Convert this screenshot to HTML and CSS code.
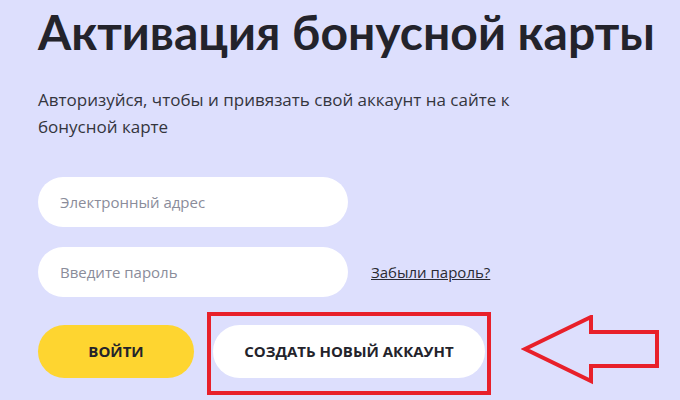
FILE: index.html
```html
<!DOCTYPE html>
<html lang="ru">
<head>
<meta charset="utf-8">
<link rel="stylesheet" href="styles.css">
</head>
<body>
<main class="page">
  <h1 class="title">Активация бонусной карты</h1>
  <p class="lead">Авторизуйся, чтобы и привязать свой аккаунт на сайте к бонусной карте</p>
  <form class="form">
    <div class="row">
      <input class="field" type="email" placeholder="Электронный адрес">
    </div>
    <div class="row">
      <input class="field" type="password" placeholder="Введите пароль">
      <a class="forgot" href="#">Забыли пароль?</a>
    </div>
    <div class="actions">
      <button class="btn btn-primary" type="button">ВОЙТИ</button>
      <div class="highlight">
        <button class="btn btn-secondary" type="button">СОЗДАТЬ НОВЫЙ АККАУНТ</button>
        <span class="frame"></span>
      </div>
      <svg class="arrow" width="142" height="72" viewBox="0 0 142 72">
        <polygon points="4,34 70,2 70,17 136,17 136,51 70,51 70,66" fill="none" stroke="#e8202a" stroke-width="4" stroke-linejoin="miter"/>
      </svg>
    </div>
  </form>
</main>
</body>
</html>
```
FILE: styles.css
```css
* { box-sizing: border-box; }
html, body {
  margin: 0;
  height: 100%;
  background: #dddffd;
}
body {
  font-family: "Open Sans", "Noto Sans", sans-serif;
  color: #23232b;
  overflow: hidden;
}
.page {
  padding: 0 0 0 38px;
}
.title {
  margin: 0;
  padding-top: 4px;
  font-family: "Lato", "Open Sans", sans-serif;
  font-weight: 700;
  font-size: 48px;
  line-height: 56px;
  white-space: nowrap;
}
.lead {
  margin: 26px 0 0;
  width: 480px;
  font-size: 17px;
  line-height: 27px;
  color: #34353d;
}
.form {
  margin-top: 37px;
  display: flex;
  flex-direction: column;
  gap: 20px;
}
.row {
  display: flex;
  align-items: center;
  gap: 23px;
}
.field {
  width: 310px;
  height: 50px;
  border: none;
  border-radius: 25px;
  background: #fff;
  padding: 0 22px;
  font-family: inherit;
  font-size: 15px;
  color: #23232b;
  outline: none;
}
.field::placeholder { color: #8a8c9a; }
.forgot {
  font-size: 15px;
  color: #2a2b33;
  text-decoration: underline;
}
.actions {
  margin-top: -2px;
  display: flex;
  align-items: center;
  gap: 19px;
}
.btn {
  height: 53px;
  border: none;
  border-radius: 27px;
  font-family: inherit;
  font-weight: 700;
  font-size: 15px;
  color: #23232b;
  cursor: pointer;
}
.btn-primary {
  width: 156px;
  background: #fed530;
}
.btn-secondary {
  width: 272px;
  background: #fff;
}
.highlight {
  position: relative;
  display: flex;
}
.frame {
  position: absolute;
  left: -6px;
  right: -6px;
  top: -13px;
  bottom: -17px;
  border: 4px solid #e8202a;
  pointer-events: none;
}
.arrow {
  display: block;
  margin-left: 17px;
}
```
